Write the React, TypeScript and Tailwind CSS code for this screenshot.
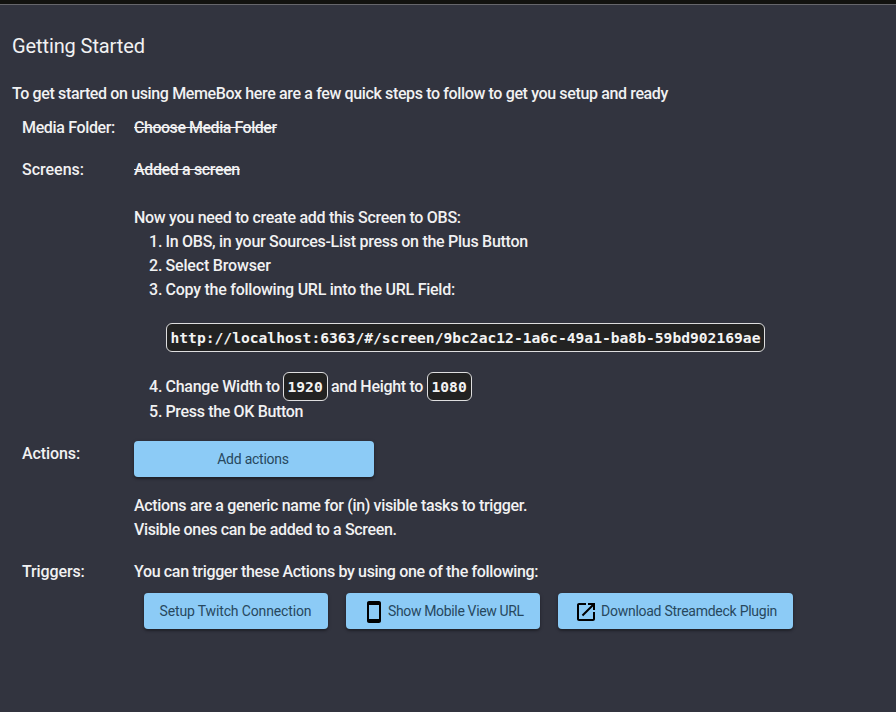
import React from "react";

const Row = ({ label, className, children }: { label: React.ReactNode; className: string; children: React.ReactNode }) => (
  <section className={`flex ${className}`}>
    <div className="w-[112px] shrink-0 whitespace-nowrap">{label}</div>
    <div className="grow">{children}</div>
  </section>
);

const Button = ({ className, children }: { className: string; children: React.ReactNode }) => (
  <button
    className={`flex h-9 items-center rounded bg-[#8ccbf6] text-[14px] font-normal text-[#27485e] shadow-[0_2px_2px_rgba(0,0,0,0.25),0_1px_4px_rgba(0,0,0,0.2)] ${className}`}
  >
    {children}
  </button>
);

const Code = ({ className, children }: { className: string; children: React.ReactNode }) => (
  <code
    className={`inline-flex h-[29px] shrink-0 items-center rounded-[6px] border border-[#dededf] bg-[#222222] pl-[3.5px] font-['DejaVu_Sans_Mono','Liberation_Mono',monospace] text-[14.63px] font-bold text-[#f3f3f3] ${className}`}
  >
    {children}
  </code>
);

export default function App() {
  return (
    <main className="h-[712px] w-[896px] overflow-hidden whitespace-nowrap bg-[#32343f] font-['Roboto',sans-serif] text-[16px] font-medium leading-6 text-[#f1f1f2]">
      <div className="h-[5px] border-b border-[#66666b] bg-[#12120f]" />
      <h1 className="mt-[25px] pl-3 text-[20px] font-normal leading-8 tracking-[-0.1px]">Getting Started</h1>
      <p className="mt-5 pl-3 tracking-[-0.365px]">To get started on using MemeBox here are a few quick steps to follow to get you setup and ready</p>
      <div className="pl-[22px]">
        <Row label={<span className="tracking-[-0.35px]">Media Folder:</span>} className="mt-[10px]">
          <span className="tracking-[-0.47px] line-through">Choose Media Folder</span>
        </Row>
        <Row label="Screens:" className="mt-[18px]">
          <div><span className="tracking-[-0.36px] line-through">Added a screen</span></div>
          <p className="mt-6 tracking-[-0.29px]">Now you need to create add this Screen to OBS:</p>
          <ol>
            <li className="flex"><span className="w-[31.5px] pl-[15px]">1.</span><span className="tracking-[-0.28px]">In OBS, in your Sources-List press on the Plus Button</span></li>
            <li className="flex"><span className="w-[31.5px] pl-[15px]">2.</span><span className="tracking-[-0.17px]">Select Browser</span></li>
            <li className="flex"><span className="w-[31.5px] pl-[15px]">3.</span><span className="tracking-[-0.25px]">Copy the following URL into the URL Field:</span></li>
            <li className="mb-5 mt-[21px] flex pl-8">
              <Code className="w-[599px]">http://localhost:6363/#/screen/9bc2ac12-1a6c-49a1-ba8b-59bd902169ae</Code>
            </li>
            <li className="flex h-[28px] items-center">
              <span className="w-[31.5px] pl-[15px] pt-[2px]">4.</span>
              <span className="w-[117.5px] pt-[2px] tracking-[-0.25px]">Change Width to</span>
              <Code className="w-[45px] pt-[2px]">1920</Code>
              <span className="w-[99px] pl-[3px] pt-[2px] tracking-[-0.3px]">and Height to</span>
              <Code className="w-[45px] pt-[2px]">1080</Code>
            </li>
            <li className="flex"><span className="w-[31.5px] pl-[15px]">5.</span><span className="tracking-[-0.34px]">Press the OK Button</span></li>
          </ol>
        </Row>
        <Row label={<span className="tracking-[-0.1px]">Actions:</span>} className="mt-[18px]">
          <Button className="mt-[-1px] w-[240px] justify-center pr-[2px] tracking-[-0.25px]">Add actions</Button>
          <p className="mt-[17px] tracking-[-0.33px]">Actions are a generic name for (in) visible tasks to trigger.</p>
          <p className="tracking-[-0.34px]">Visible ones can be added to a Screen.</p>
        </Row>
        <Row label={<span className="tracking-[-0.12px]">Triggers:</span>} className="mt-[18px]">
          <p className="tracking-[-0.34px]">You can trigger these Actions by using one of the following:</p>
          <div className="mt-[9px] flex gap-[18px] pl-[10px]">
            <Button className="w-[184px] pl-[15.5px] tracking-[-0.14px]">Setup Twitch Connection</Button>
            <Button className="w-[194px] pl-4 tracking-[-0.35px]">
              <svg viewBox="0 0 24 24" className="mr-[2px] mt-[2px] size-6 shrink-0" fill="#000"><path d="M17 1.01 7 1c-1.1 0-2 .9-2 2v18c0 1.1.9 2 2 2h10c1.1 0 2-.9 2-2V3c0-1.1-.9-1.99-2-1.99zM17 19H7V5h10v14z" /></svg>
              <span>Show Mobile View URL</span>
            </Button>
            <Button className="w-[235px] pl-4 tracking-[-0.26px]">
              <svg viewBox="0 0 24 24" className="mr-[3px] mt-[2px] size-6 shrink-0" fill="#000"><path d="M19 19H5V5h7V3H5c-1.11 0-2 .9-2 2v14c0 1.1.89 2 2 2h14c1.1 0 2-.9 2-2v-7h-2v7zM14 3v2h3.59l-9.83 9.83 1.41 1.41L19 6.41V10h2V3h-7z" /></svg>
              <span>Download Streamdeck Plugin</span>
            </Button>
          </div>
        </Row>
      </div>
    </main>
  );
}
